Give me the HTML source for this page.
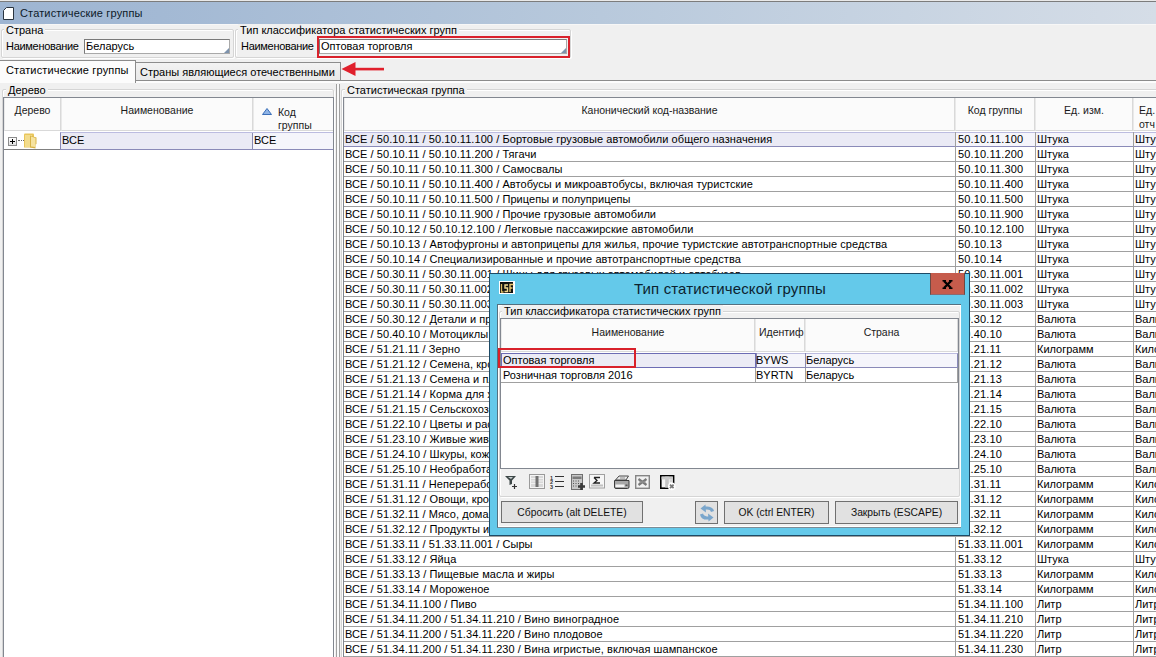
<!DOCTYPE html><html><head><meta charset="utf-8"><style>
*{box-sizing:border-box;margin:0;padding:0}
html,body{width:1156px;height:657px;overflow:hidden;background:#f0f0f0;font-family:"Liberation Sans",sans-serif;font-size:11px;color:#000;position:relative}
.a{position:absolute}
.t{position:absolute;white-space:nowrap;line-height:14px}
.frame{position:absolute;border:1px solid #d5d5d5;border-radius:2px;box-shadow:inset 1px 1px 0 #fff,1px 1px 0 #fff}
.lbl{position:absolute;background:#f0f0f0;padding:0 2px;line-height:12px;white-space:nowrap}
.inp{position:absolute;background:#fff;border:1px solid #7a7a7a;border-right-color:#a9a9a9;border-bottom-color:#a9a9a9}
.grip{position:absolute;right:0;bottom:0;width:0;height:0;border-left:5px solid transparent;border-bottom:5px solid #7d93ad}
.grid{position:absolute;background:#fff;border:1px solid #828790;overflow:hidden}
.hdr{position:absolute;background:#fbfbfb;border-left:1px solid #e9e9e9;border-right:1px solid #d9d9d9;border-bottom:1px solid #d9d9d9}
.ht{position:absolute;white-space:nowrap;font-size:10.5px;line-height:14px;text-align:center;color:#1a1a1a}
.row{position:absolute;left:0;height:15px;border-bottom:1px solid #a0a0a0}
.c{position:absolute;top:0;height:15px;line-height:14px;white-space:nowrap;overflow:hidden;padding-left:1px;border-left:1px solid #a0a0a0}
.sel{background:#f5f5fb;border-top:1px solid #bcbce0;border-bottom:1px solid #8a8ab8}
.btn{position:absolute;border:1px solid #707070;background:#e1e1e1;text-align:center;font-size:10.3px;line-height:22px;white-space:nowrap;color:#111}
</style></head><body>
<div class="a" style="left:0;top:0;width:1156px;height:1px;background:#e9e9e9"></div>
<div class="a" style="left:0;top:1px;width:1156px;height:1px;background:#7c7c7c"></div>
<div class="a" style="left:0;top:2px;width:1156px;height:22px;background:linear-gradient(90deg,#9eb5d2 0%,#a3b9d4 14%,#b8c9dc 52%,#d5dde7 100%)"></div>
<div class="a" style="left:0;top:24px;width:1156px;height:1px;background:#f7f7f7"></div>
<svg class="a" style="left:2px;top:6px" width="14" height="15" viewBox="0 0 14 15"><path d="M4.5 1.5 H11.5 V13.5 H1.5 V4.5 Z" fill="#fff" stroke="#2a3440" stroke-width="1"/></svg>
<div class="t" style="left:20px;top:6px;font-size:11px;letter-spacing:0.15px;color:#0d1a2a">Статистические группы</div>
<div class="frame" style="left:1px;top:29px;width:233px;height:29px"></div>
<div class="lbl" style="left:4px;top:24px">Страна</div>
<div class="t" style="left:6px;top:39px;letter-spacing:-0.3px">Наименование</div>
<div class="inp" style="left:84px;top:39px;width:146px;height:15px"><div class="grip"></div></div>
<div class="t" style="left:86px;top:39px">Беларусь</div>
<div class="frame" style="left:235px;top:29px;width:336px;height:29px"></div>
<div class="lbl" style="left:238px;top:24px">Тип классификатора статистических групп</div>
<div class="t" style="left:241px;top:39px;letter-spacing:-0.3px">Наименование</div>
<div class="inp" style="left:319px;top:39px;width:248px;height:15px"><div class="grip"></div></div>
<div class="t" style="left:321px;top:39px">Оптовая торговля</div>
<div class="a" style="left:317px;top:36px;width:253px;height:22px;border:2px solid #d9212b"></div>
<div class="a" style="left:135px;top:62px;width:206px;height:19px;border:1px solid #8c8c8c;border-bottom:none;background:linear-gradient(#f2f2f2,#e8e8e8)"></div>
<div class="t" style="left:140px;top:65px">Страны являющиеся отечественными</div>
<div class="a" style="left:0;top:80px;width:1156px;height:1px;background:#8c8c8c"></div>
<div class="a" style="left:0;top:81px;width:1156px;height:2px;background:#fdfdfd"></div>
<div class="a" style="left:0;top:60px;width:136px;height:23px;border:1px solid #8c8c8c;border-left:none;border-bottom:none;background:#fcfcfc"></div>
<div class="t" style="left:6px;top:63px;letter-spacing:0.15px">Статистические группы</div>
<svg class="a" style="left:340px;top:60px" width="50" height="20" viewBox="0 0 50 20"><path d="M1.5 9 L15.5 2 L15.5 16 Z" fill="#e0202c"/><rect x="14" y="7.8" width="30" height="2.6" fill="#e0202c"/></svg>
<div class="frame" style="left:2px;top:89px;width:332px;height:580px"></div>
<div class="lbl" style="left:6px;top:84px">Дерево</div>
<div class="grid" style="left:3px;top:97px;width:331px;height:570px">
<div class="hdr" style="left:0;top:0;width:57px;height:33px"></div>
<div class="hdr" style="left:57px;top:0;width:192px;height:33px"></div>
<div class="hdr" style="left:249px;top:0;width:82px;height:33px"></div>
<div class="ht" style="left:0;top:5px;width:57px">Дерево</div>
<div class="ht" style="left:57px;top:5px;width:192px">Наименование</div>
<svg class="a" style="left:258px;top:10px" width="10" height="7" viewBox="0 0 10 7"><path d="M5 0.5 L9.5 6.5 H0.5 Z" fill="#8fb4e6" stroke="#3b6fb8" stroke-width="1"/></svg>
<div class="ht" style="left:274px;top:7px;text-align:left">Код</div>
<div class="ht" style="left:274px;top:20px;text-align:left">группы</div>
<div class="a" style="left:0;top:34px;width:331px;height:18px;border-bottom:1px solid #808080"></div>
<div class="a sel" style="left:56px;top:34px;width:275px;height:18px;border-left:1px solid #8a8ab8;border-right:2px solid #80809a"></div>
<div class="a" style="left:57px;top:35px;width:191px;height:16px;background:#eaeaf5"></div>
<div class="a" style="left:248px;top:35px;width:1px;height:16px;background:#8a8ab0"></div>
<div class="t" style="left:58px;top:35px">ВСЕ</div>
<div class="t" style="left:250px;top:35px">ВСЕ</div>
<div class="a" style="left:4px;top:39px;width:9px;height:9px;border:1px solid #8c8c8c;background:linear-gradient(#fff,#e0e0e0)"></div>
<div class="a" style="left:6px;top:43px;width:5px;height:1px;background:#000"></div>
<div class="a" style="left:8px;top:41px;width:1px;height:5px;background:#000"></div>
<div class="a" style="left:14px;top:42px;width:6px;height:1px;border-top:1px dotted #666"></div>
<svg class="a" style="left:17px;top:34px" width="18" height="17" viewBox="0 0 18 17"><path d="M3 2.5 Q3 1.5 4 1.5 H12 Q13 1.5 13 2.5 V15.5 H3 Z" fill="#e9c65a"/><path d="M4 3 H11 V15 H4 Z" fill="#f3dc8c"/><path d="M9 3.5 L15.5 5.5 V12 L14.5 12.5 V16.5 L9 15.5 Z" fill="#d9b448"/><path d="M10 4.5 L14.5 6 V15 L10 14.5 Z" fill="#f6e3a0"/></svg>
</div>
<div class="a" style="left:336px;top:84px;width:1px;height:573px;background:#a0a0a0"></div>
<div class="a" style="left:337px;top:84px;width:2px;height:573px;background:#fafafa"></div>
<div class="a" style="left:339px;top:84px;width:1px;height:573px;background:#a0a0a0"></div>
<div class="frame" style="left:341px;top:89px;width:830px;height:580px"></div>
<div class="lbl" style="left:345px;top:84px">Статистическая группа</div>
<div class="grid" style="left:343px;top:97px;width:820px;height:570px">
<div class="hdr" style="left:0px;top:0;width:611px;height:33px"></div>
<div class="hdr" style="left:611px;top:0;width:80px;height:33px"></div>
<div class="hdr" style="left:691px;top:0;width:98px;height:33px"></div>
<div class="hdr" style="left:789px;top:0;width:40px;height:33px"></div>
<div class="ht" style="left:0;top:5px;width:611px">Канонический код-название</div>
<div class="ht" style="left:611px;top:5px;width:80px">Код группы</div>
<div class="ht" style="left:691px;top:5px;width:98px">Ед. изм.</div>
<div class="ht" style="left:795px;top:5px;text-align:left">Ед.</div>
<div class="ht" style="left:795px;top:19px;text-align:left">отч</div>
<div class="a" style="left:0;top:34px;width:820px;height:15px;border-bottom:1px solid #a0a0a0;background:linear-gradient(90deg,#eaeaf5 611px,#f5f5fb 611px);border-top:1px solid #bcbce0;border-bottom-color:#8a8ab8"></div>
<div class="t" style="left:1px;top:34px;letter-spacing:0.07px">ВСЕ / 50.10.11 / 50.10.11.100 / Бортовые грузовые автомобили общего назначения</div>
<div class="a" style="left:611px;top:34px;width:1px;height:15px;background:#a0a0a0"></div>
<div class="t" style="left:614px;top:34px;letter-spacing:0.15px">50.10.11.100</div>
<div class="a" style="left:691px;top:34px;width:1px;height:15px;background:#a0a0a0"></div>
<div class="t" style="left:693px;top:34px">Штука</div>
<div class="a" style="left:789px;top:34px;width:1px;height:15px;background:#a0a0a0"></div>
<div class="t" style="left:791px;top:34px">Штука</div>
<div class="a" style="left:0;top:49px;width:820px;height:15px;border-bottom:1px solid #a0a0a0"></div>
<div class="t" style="left:1px;top:49px;letter-spacing:0.07px">ВСЕ / 50.10.11 / 50.10.11.200 / Тягачи</div>
<div class="a" style="left:611px;top:49px;width:1px;height:15px;background:#a0a0a0"></div>
<div class="t" style="left:614px;top:49px;letter-spacing:0.15px">50.10.11.200</div>
<div class="a" style="left:691px;top:49px;width:1px;height:15px;background:#a0a0a0"></div>
<div class="t" style="left:693px;top:49px">Штука</div>
<div class="a" style="left:789px;top:49px;width:1px;height:15px;background:#a0a0a0"></div>
<div class="t" style="left:791px;top:49px">Штука</div>
<div class="a" style="left:0;top:64px;width:820px;height:15px;border-bottom:1px solid #a0a0a0"></div>
<div class="t" style="left:1px;top:64px;letter-spacing:0.07px">ВСЕ / 50.10.11 / 50.10.11.300 / Самосвалы</div>
<div class="a" style="left:611px;top:64px;width:1px;height:15px;background:#a0a0a0"></div>
<div class="t" style="left:614px;top:64px;letter-spacing:0.15px">50.10.11.300</div>
<div class="a" style="left:691px;top:64px;width:1px;height:15px;background:#a0a0a0"></div>
<div class="t" style="left:693px;top:64px">Штука</div>
<div class="a" style="left:789px;top:64px;width:1px;height:15px;background:#a0a0a0"></div>
<div class="t" style="left:791px;top:64px">Штука</div>
<div class="a" style="left:0;top:79px;width:820px;height:15px;border-bottom:1px solid #a0a0a0"></div>
<div class="t" style="left:1px;top:79px;letter-spacing:0.07px">ВСЕ / 50.10.11 / 50.10.11.400 / Автобусы и микроавтобусы, включая туристские</div>
<div class="a" style="left:611px;top:79px;width:1px;height:15px;background:#a0a0a0"></div>
<div class="t" style="left:614px;top:79px;letter-spacing:0.15px">50.10.11.400</div>
<div class="a" style="left:691px;top:79px;width:1px;height:15px;background:#a0a0a0"></div>
<div class="t" style="left:693px;top:79px">Штука</div>
<div class="a" style="left:789px;top:79px;width:1px;height:15px;background:#a0a0a0"></div>
<div class="t" style="left:791px;top:79px">Штука</div>
<div class="a" style="left:0;top:94px;width:820px;height:15px;border-bottom:1px solid #a0a0a0"></div>
<div class="t" style="left:1px;top:94px;letter-spacing:0.07px">ВСЕ / 50.10.11 / 50.10.11.500 / Прицепы и полуприцепы</div>
<div class="a" style="left:611px;top:94px;width:1px;height:15px;background:#a0a0a0"></div>
<div class="t" style="left:614px;top:94px;letter-spacing:0.15px">50.10.11.500</div>
<div class="a" style="left:691px;top:94px;width:1px;height:15px;background:#a0a0a0"></div>
<div class="t" style="left:693px;top:94px">Штука</div>
<div class="a" style="left:789px;top:94px;width:1px;height:15px;background:#a0a0a0"></div>
<div class="t" style="left:791px;top:94px">Штука</div>
<div class="a" style="left:0;top:109px;width:820px;height:15px;border-bottom:1px solid #a0a0a0"></div>
<div class="t" style="left:1px;top:109px;letter-spacing:0.07px">ВСЕ / 50.10.11 / 50.10.11.900 / Прочие грузовые автомобили</div>
<div class="a" style="left:611px;top:109px;width:1px;height:15px;background:#a0a0a0"></div>
<div class="t" style="left:614px;top:109px;letter-spacing:0.15px">50.10.11.900</div>
<div class="a" style="left:691px;top:109px;width:1px;height:15px;background:#a0a0a0"></div>
<div class="t" style="left:693px;top:109px">Штука</div>
<div class="a" style="left:789px;top:109px;width:1px;height:15px;background:#a0a0a0"></div>
<div class="t" style="left:791px;top:109px">Штука</div>
<div class="a" style="left:0;top:124px;width:820px;height:15px;border-bottom:1px solid #a0a0a0"></div>
<div class="t" style="left:1px;top:124px;letter-spacing:0.07px">ВСЕ / 50.10.12 / 50.10.12.100 / Легковые пассажирские автомобили</div>
<div class="a" style="left:611px;top:124px;width:1px;height:15px;background:#a0a0a0"></div>
<div class="t" style="left:614px;top:124px;letter-spacing:0.15px">50.10.12.100</div>
<div class="a" style="left:691px;top:124px;width:1px;height:15px;background:#a0a0a0"></div>
<div class="t" style="left:693px;top:124px">Штука</div>
<div class="a" style="left:789px;top:124px;width:1px;height:15px;background:#a0a0a0"></div>
<div class="t" style="left:791px;top:124px">Штука</div>
<div class="a" style="left:0;top:139px;width:820px;height:15px;border-bottom:1px solid #a0a0a0"></div>
<div class="t" style="left:1px;top:139px;letter-spacing:0.07px">ВСЕ / 50.10.13 / Автофургоны и автоприцепы для жилья, прочие туристские автотранспортные средства</div>
<div class="a" style="left:611px;top:139px;width:1px;height:15px;background:#a0a0a0"></div>
<div class="t" style="left:614px;top:139px;letter-spacing:0.15px">50.10.13</div>
<div class="a" style="left:691px;top:139px;width:1px;height:15px;background:#a0a0a0"></div>
<div class="t" style="left:693px;top:139px">Штука</div>
<div class="a" style="left:789px;top:139px;width:1px;height:15px;background:#a0a0a0"></div>
<div class="t" style="left:791px;top:139px">Штука</div>
<div class="a" style="left:0;top:154px;width:820px;height:15px;border-bottom:1px solid #a0a0a0"></div>
<div class="t" style="left:1px;top:154px;letter-spacing:0.07px">ВСЕ / 50.10.14 / Специализированные и прочие автотранспортные средства</div>
<div class="a" style="left:611px;top:154px;width:1px;height:15px;background:#a0a0a0"></div>
<div class="t" style="left:614px;top:154px;letter-spacing:0.15px">50.10.14</div>
<div class="a" style="left:691px;top:154px;width:1px;height:15px;background:#a0a0a0"></div>
<div class="t" style="left:693px;top:154px">Штука</div>
<div class="a" style="left:789px;top:154px;width:1px;height:15px;background:#a0a0a0"></div>
<div class="t" style="left:791px;top:154px">Штука</div>
<div class="a" style="left:0;top:169px;width:820px;height:15px;border-bottom:1px solid #a0a0a0"></div>
<div class="t" style="left:1px;top:169px;letter-spacing:0.07px">ВСЕ / 50.30.11 / 50.30.11.001 / Шины для грузовых автомобилей и автобусов</div>
<div class="a" style="left:611px;top:169px;width:1px;height:15px;background:#a0a0a0"></div>
<div class="t" style="left:614px;top:169px;letter-spacing:0.15px">50.30.11.001</div>
<div class="a" style="left:691px;top:169px;width:1px;height:15px;background:#a0a0a0"></div>
<div class="t" style="left:693px;top:169px">Штука</div>
<div class="a" style="left:789px;top:169px;width:1px;height:15px;background:#a0a0a0"></div>
<div class="t" style="left:791px;top:169px">Штука</div>
<div class="a" style="left:0;top:184px;width:820px;height:15px;border-bottom:1px solid #a0a0a0"></div>
<div class="t" style="left:1px;top:184px;letter-spacing:0.07px">ВСЕ / 50.30.11 / 50.30.11.002 / Шины для легковых автомобилей</div>
<div class="a" style="left:611px;top:184px;width:1px;height:15px;background:#a0a0a0"></div>
<div class="t" style="left:614px;top:184px;letter-spacing:0.15px">50.30.11.002</div>
<div class="a" style="left:691px;top:184px;width:1px;height:15px;background:#a0a0a0"></div>
<div class="t" style="left:693px;top:184px">Штука</div>
<div class="a" style="left:789px;top:184px;width:1px;height:15px;background:#a0a0a0"></div>
<div class="t" style="left:791px;top:184px">Штука</div>
<div class="a" style="left:0;top:199px;width:820px;height:15px;border-bottom:1px solid #a0a0a0"></div>
<div class="t" style="left:1px;top:199px;letter-spacing:0.07px">ВСЕ / 50.30.11 / 50.30.11.003 / Шины прочие</div>
<div class="a" style="left:611px;top:199px;width:1px;height:15px;background:#a0a0a0"></div>
<div class="t" style="left:614px;top:199px;letter-spacing:0.15px">50.30.11.003</div>
<div class="a" style="left:691px;top:199px;width:1px;height:15px;background:#a0a0a0"></div>
<div class="t" style="left:693px;top:199px">Штука</div>
<div class="a" style="left:789px;top:199px;width:1px;height:15px;background:#a0a0a0"></div>
<div class="t" style="left:791px;top:199px">Штука</div>
<div class="a" style="left:0;top:214px;width:820px;height:15px;border-bottom:1px solid #a0a0a0"></div>
<div class="t" style="left:1px;top:214px;letter-spacing:0.07px">ВСЕ / 50.30.12 / Детали и принадлежности</div>
<div class="a" style="left:611px;top:214px;width:1px;height:15px;background:#a0a0a0"></div>
<div class="t" style="left:614px;top:214px;letter-spacing:0.15px">50.30.12</div>
<div class="a" style="left:691px;top:214px;width:1px;height:15px;background:#a0a0a0"></div>
<div class="t" style="left:693px;top:214px">Валюта</div>
<div class="a" style="left:789px;top:214px;width:1px;height:15px;background:#a0a0a0"></div>
<div class="t" style="left:791px;top:214px">Валюта</div>
<div class="a" style="left:0;top:229px;width:820px;height:15px;border-bottom:1px solid #a0a0a0"></div>
<div class="t" style="left:1px;top:229px;letter-spacing:0.07px">ВСЕ / 50.40.10 / Мотоциклы</div>
<div class="a" style="left:611px;top:229px;width:1px;height:15px;background:#a0a0a0"></div>
<div class="t" style="left:614px;top:229px;letter-spacing:0.15px">50.40.10</div>
<div class="a" style="left:691px;top:229px;width:1px;height:15px;background:#a0a0a0"></div>
<div class="t" style="left:693px;top:229px">Валюта</div>
<div class="a" style="left:789px;top:229px;width:1px;height:15px;background:#a0a0a0"></div>
<div class="t" style="left:791px;top:229px">Валюта</div>
<div class="a" style="left:0;top:244px;width:820px;height:15px;border-bottom:1px solid #a0a0a0"></div>
<div class="t" style="left:1px;top:244px;letter-spacing:0.07px">ВСЕ / 51.21.11 / Зерно</div>
<div class="a" style="left:611px;top:244px;width:1px;height:15px;background:#a0a0a0"></div>
<div class="t" style="left:614px;top:244px;letter-spacing:0.15px">51.21.11</div>
<div class="a" style="left:691px;top:244px;width:1px;height:15px;background:#a0a0a0"></div>
<div class="t" style="left:693px;top:244px">Килограмм</div>
<div class="a" style="left:789px;top:244px;width:1px;height:15px;background:#a0a0a0"></div>
<div class="t" style="left:791px;top:244px">Килограмм</div>
<div class="a" style="left:0;top:259px;width:820px;height:15px;border-bottom:1px solid #a0a0a0"></div>
<div class="t" style="left:1px;top:259px;letter-spacing:0.07px">ВСЕ / 51.21.12 / Семена, кроме масличных</div>
<div class="a" style="left:611px;top:259px;width:1px;height:15px;background:#a0a0a0"></div>
<div class="t" style="left:614px;top:259px;letter-spacing:0.15px">51.21.12</div>
<div class="a" style="left:691px;top:259px;width:1px;height:15px;background:#a0a0a0"></div>
<div class="t" style="left:693px;top:259px">Валюта</div>
<div class="a" style="left:789px;top:259px;width:1px;height:15px;background:#a0a0a0"></div>
<div class="t" style="left:791px;top:259px">Валюта</div>
<div class="a" style="left:0;top:274px;width:820px;height:15px;border-bottom:1px solid #a0a0a0"></div>
<div class="t" style="left:1px;top:274px;letter-spacing:0.07px">ВСЕ / 51.21.13 / Семена и плоды масличных</div>
<div class="a" style="left:611px;top:274px;width:1px;height:15px;background:#a0a0a0"></div>
<div class="t" style="left:614px;top:274px;letter-spacing:0.15px">51.21.13</div>
<div class="a" style="left:691px;top:274px;width:1px;height:15px;background:#a0a0a0"></div>
<div class="t" style="left:693px;top:274px">Валюта</div>
<div class="a" style="left:789px;top:274px;width:1px;height:15px;background:#a0a0a0"></div>
<div class="t" style="left:791px;top:274px">Валюта</div>
<div class="a" style="left:0;top:289px;width:820px;height:15px;border-bottom:1px solid #a0a0a0"></div>
<div class="t" style="left:1px;top:289px;letter-spacing:0.07px">ВСЕ / 51.21.14 / Корма для животных</div>
<div class="a" style="left:611px;top:289px;width:1px;height:15px;background:#a0a0a0"></div>
<div class="t" style="left:614px;top:289px;letter-spacing:0.15px">51.21.14</div>
<div class="a" style="left:691px;top:289px;width:1px;height:15px;background:#a0a0a0"></div>
<div class="t" style="left:693px;top:289px">Валюта</div>
<div class="a" style="left:789px;top:289px;width:1px;height:15px;background:#a0a0a0"></div>
<div class="t" style="left:791px;top:289px">Валюта</div>
<div class="a" style="left:0;top:304px;width:820px;height:15px;border-bottom:1px solid #a0a0a0"></div>
<div class="t" style="left:1px;top:304px;letter-spacing:0.07px">ВСЕ / 51.21.15 / Сельскохозяйственное сырье</div>
<div class="a" style="left:611px;top:304px;width:1px;height:15px;background:#a0a0a0"></div>
<div class="t" style="left:614px;top:304px;letter-spacing:0.15px">51.21.15</div>
<div class="a" style="left:691px;top:304px;width:1px;height:15px;background:#a0a0a0"></div>
<div class="t" style="left:693px;top:304px">Валюта</div>
<div class="a" style="left:789px;top:304px;width:1px;height:15px;background:#a0a0a0"></div>
<div class="t" style="left:791px;top:304px">Валюта</div>
<div class="a" style="left:0;top:319px;width:820px;height:15px;border-bottom:1px solid #a0a0a0"></div>
<div class="t" style="left:1px;top:319px;letter-spacing:0.07px">ВСЕ / 51.22.10 / Цветы и растения</div>
<div class="a" style="left:611px;top:319px;width:1px;height:15px;background:#a0a0a0"></div>
<div class="t" style="left:614px;top:319px;letter-spacing:0.15px">51.22.10</div>
<div class="a" style="left:691px;top:319px;width:1px;height:15px;background:#a0a0a0"></div>
<div class="t" style="left:693px;top:319px">Валюта</div>
<div class="a" style="left:789px;top:319px;width:1px;height:15px;background:#a0a0a0"></div>
<div class="t" style="left:791px;top:319px">Валюта</div>
<div class="a" style="left:0;top:334px;width:820px;height:15px;border-bottom:1px solid #a0a0a0"></div>
<div class="t" style="left:1px;top:334px;letter-spacing:0.07px">ВСЕ / 51.23.10 / Живые животные</div>
<div class="a" style="left:611px;top:334px;width:1px;height:15px;background:#a0a0a0"></div>
<div class="t" style="left:614px;top:334px;letter-spacing:0.15px">51.23.10</div>
<div class="a" style="left:691px;top:334px;width:1px;height:15px;background:#a0a0a0"></div>
<div class="t" style="left:693px;top:334px">Валюта</div>
<div class="a" style="left:789px;top:334px;width:1px;height:15px;background:#a0a0a0"></div>
<div class="t" style="left:791px;top:334px">Валюта</div>
<div class="a" style="left:0;top:349px;width:820px;height:15px;border-bottom:1px solid #a0a0a0"></div>
<div class="t" style="left:1px;top:349px;letter-spacing:0.07px">ВСЕ / 51.24.10 / Шкуры, кожа</div>
<div class="a" style="left:611px;top:349px;width:1px;height:15px;background:#a0a0a0"></div>
<div class="t" style="left:614px;top:349px;letter-spacing:0.15px">51.24.10</div>
<div class="a" style="left:691px;top:349px;width:1px;height:15px;background:#a0a0a0"></div>
<div class="t" style="left:693px;top:349px">Валюта</div>
<div class="a" style="left:789px;top:349px;width:1px;height:15px;background:#a0a0a0"></div>
<div class="t" style="left:791px;top:349px">Валюта</div>
<div class="a" style="left:0;top:364px;width:820px;height:15px;border-bottom:1px solid #a0a0a0"></div>
<div class="t" style="left:1px;top:364px;letter-spacing:0.07px">ВСЕ / 51.25.10 / Необработанный табак</div>
<div class="a" style="left:611px;top:364px;width:1px;height:15px;background:#a0a0a0"></div>
<div class="t" style="left:614px;top:364px;letter-spacing:0.15px">51.25.10</div>
<div class="a" style="left:691px;top:364px;width:1px;height:15px;background:#a0a0a0"></div>
<div class="t" style="left:693px;top:364px">Валюта</div>
<div class="a" style="left:789px;top:364px;width:1px;height:15px;background:#a0a0a0"></div>
<div class="t" style="left:791px;top:364px">Валюта</div>
<div class="a" style="left:0;top:379px;width:820px;height:15px;border-bottom:1px solid #a0a0a0"></div>
<div class="t" style="left:1px;top:379px;letter-spacing:0.07px">ВСЕ / 51.31.11 / Непереработанные фрукты</div>
<div class="a" style="left:611px;top:379px;width:1px;height:15px;background:#a0a0a0"></div>
<div class="t" style="left:614px;top:379px;letter-spacing:0.15px">51.31.11</div>
<div class="a" style="left:691px;top:379px;width:1px;height:15px;background:#a0a0a0"></div>
<div class="t" style="left:693px;top:379px">Килограмм</div>
<div class="a" style="left:789px;top:379px;width:1px;height:15px;background:#a0a0a0"></div>
<div class="t" style="left:791px;top:379px">Килограмм</div>
<div class="a" style="left:0;top:394px;width:820px;height:15px;border-bottom:1px solid #a0a0a0"></div>
<div class="t" style="left:1px;top:394px;letter-spacing:0.07px">ВСЕ / 51.31.12 / Овощи, кроме картофеля</div>
<div class="a" style="left:611px;top:394px;width:1px;height:15px;background:#a0a0a0"></div>
<div class="t" style="left:614px;top:394px;letter-spacing:0.15px">51.31.12</div>
<div class="a" style="left:691px;top:394px;width:1px;height:15px;background:#a0a0a0"></div>
<div class="t" style="left:693px;top:394px">Килограмм</div>
<div class="a" style="left:789px;top:394px;width:1px;height:15px;background:#a0a0a0"></div>
<div class="t" style="left:791px;top:394px">Килограмм</div>
<div class="a" style="left:0;top:409px;width:820px;height:15px;border-bottom:1px solid #a0a0a0"></div>
<div class="t" style="left:1px;top:409px;letter-spacing:0.07px">ВСЕ / 51.32.11 / Мясо, домашняя птица</div>
<div class="a" style="left:611px;top:409px;width:1px;height:15px;background:#a0a0a0"></div>
<div class="t" style="left:614px;top:409px;letter-spacing:0.15px">51.32.11</div>
<div class="a" style="left:691px;top:409px;width:1px;height:15px;background:#a0a0a0"></div>
<div class="t" style="left:693px;top:409px">Килограмм</div>
<div class="a" style="left:789px;top:409px;width:1px;height:15px;background:#a0a0a0"></div>
<div class="t" style="left:791px;top:409px">Килограмм</div>
<div class="a" style="left:0;top:424px;width:820px;height:15px;border-bottom:1px solid #a0a0a0"></div>
<div class="t" style="left:1px;top:424px;letter-spacing:0.07px">ВСЕ / 51.32.12 / Продукты из мяса</div>
<div class="a" style="left:611px;top:424px;width:1px;height:15px;background:#a0a0a0"></div>
<div class="t" style="left:614px;top:424px;letter-spacing:0.15px">51.32.12</div>
<div class="a" style="left:691px;top:424px;width:1px;height:15px;background:#a0a0a0"></div>
<div class="t" style="left:693px;top:424px">Килограмм</div>
<div class="a" style="left:789px;top:424px;width:1px;height:15px;background:#a0a0a0"></div>
<div class="t" style="left:791px;top:424px">Килограмм</div>
<div class="a" style="left:0;top:439px;width:820px;height:15px;border-bottom:1px solid #a0a0a0"></div>
<div class="t" style="left:1px;top:439px;letter-spacing:0.07px">ВСЕ / 51.33.11 / 51.33.11.001 / Сыры</div>
<div class="a" style="left:611px;top:439px;width:1px;height:15px;background:#a0a0a0"></div>
<div class="t" style="left:614px;top:439px;letter-spacing:0.15px">51.33.11.001</div>
<div class="a" style="left:691px;top:439px;width:1px;height:15px;background:#a0a0a0"></div>
<div class="t" style="left:693px;top:439px">Килограмм</div>
<div class="a" style="left:789px;top:439px;width:1px;height:15px;background:#a0a0a0"></div>
<div class="t" style="left:791px;top:439px">Килограмм</div>
<div class="a" style="left:0;top:454px;width:820px;height:15px;border-bottom:1px solid #a0a0a0"></div>
<div class="t" style="left:1px;top:454px;letter-spacing:0.07px">ВСЕ / 51.33.12 / Яйца</div>
<div class="a" style="left:611px;top:454px;width:1px;height:15px;background:#a0a0a0"></div>
<div class="t" style="left:614px;top:454px;letter-spacing:0.15px">51.33.12</div>
<div class="a" style="left:691px;top:454px;width:1px;height:15px;background:#a0a0a0"></div>
<div class="t" style="left:693px;top:454px">Штука</div>
<div class="a" style="left:789px;top:454px;width:1px;height:15px;background:#a0a0a0"></div>
<div class="t" style="left:791px;top:454px">Штука</div>
<div class="a" style="left:0;top:469px;width:820px;height:15px;border-bottom:1px solid #a0a0a0"></div>
<div class="t" style="left:1px;top:469px;letter-spacing:0.07px">ВСЕ / 51.33.13 / Пищевые масла и жиры</div>
<div class="a" style="left:611px;top:469px;width:1px;height:15px;background:#a0a0a0"></div>
<div class="t" style="left:614px;top:469px;letter-spacing:0.15px">51.33.13</div>
<div class="a" style="left:691px;top:469px;width:1px;height:15px;background:#a0a0a0"></div>
<div class="t" style="left:693px;top:469px">Килограмм</div>
<div class="a" style="left:789px;top:469px;width:1px;height:15px;background:#a0a0a0"></div>
<div class="t" style="left:791px;top:469px">Килограмм</div>
<div class="a" style="left:0;top:484px;width:820px;height:15px;border-bottom:1px solid #a0a0a0"></div>
<div class="t" style="left:1px;top:484px;letter-spacing:0.07px">ВСЕ / 51.33.14 / Мороженое</div>
<div class="a" style="left:611px;top:484px;width:1px;height:15px;background:#a0a0a0"></div>
<div class="t" style="left:614px;top:484px;letter-spacing:0.15px">51.33.14</div>
<div class="a" style="left:691px;top:484px;width:1px;height:15px;background:#a0a0a0"></div>
<div class="t" style="left:693px;top:484px">Килограмм</div>
<div class="a" style="left:789px;top:484px;width:1px;height:15px;background:#a0a0a0"></div>
<div class="t" style="left:791px;top:484px">Килограмм</div>
<div class="a" style="left:0;top:499px;width:820px;height:15px;border-bottom:1px solid #a0a0a0"></div>
<div class="t" style="left:1px;top:499px;letter-spacing:0.07px">ВСЕ / 51.34.11.100 / Пиво</div>
<div class="a" style="left:611px;top:499px;width:1px;height:15px;background:#a0a0a0"></div>
<div class="t" style="left:614px;top:499px;letter-spacing:0.15px">51.34.11.100</div>
<div class="a" style="left:691px;top:499px;width:1px;height:15px;background:#a0a0a0"></div>
<div class="t" style="left:693px;top:499px">Литр</div>
<div class="a" style="left:789px;top:499px;width:1px;height:15px;background:#a0a0a0"></div>
<div class="t" style="left:791px;top:499px">Литр</div>
<div class="a" style="left:0;top:514px;width:820px;height:15px;border-bottom:1px solid #a0a0a0"></div>
<div class="t" style="left:1px;top:514px;letter-spacing:0.07px">ВСЕ / 51.34.11.200 / 51.34.11.210 / Вино виноградное</div>
<div class="a" style="left:611px;top:514px;width:1px;height:15px;background:#a0a0a0"></div>
<div class="t" style="left:614px;top:514px;letter-spacing:0.15px">51.34.11.210</div>
<div class="a" style="left:691px;top:514px;width:1px;height:15px;background:#a0a0a0"></div>
<div class="t" style="left:693px;top:514px">Литр</div>
<div class="a" style="left:789px;top:514px;width:1px;height:15px;background:#a0a0a0"></div>
<div class="t" style="left:791px;top:514px">Литр</div>
<div class="a" style="left:0;top:529px;width:820px;height:15px;border-bottom:1px solid #a0a0a0"></div>
<div class="t" style="left:1px;top:529px;letter-spacing:0.07px">ВСЕ / 51.34.11.200 / 51.34.11.220 / Вино плодовое</div>
<div class="a" style="left:611px;top:529px;width:1px;height:15px;background:#a0a0a0"></div>
<div class="t" style="left:614px;top:529px;letter-spacing:0.15px">51.34.11.220</div>
<div class="a" style="left:691px;top:529px;width:1px;height:15px;background:#a0a0a0"></div>
<div class="t" style="left:693px;top:529px">Литр</div>
<div class="a" style="left:789px;top:529px;width:1px;height:15px;background:#a0a0a0"></div>
<div class="t" style="left:791px;top:529px">Литр</div>
<div class="a" style="left:0;top:544px;width:820px;height:15px;border-bottom:1px solid #a0a0a0"></div>
<div class="t" style="left:1px;top:544px;letter-spacing:0.07px">ВСЕ / 51.34.11.200 / 51.34.11.230 / Вина игристые, включая шампанское</div>
<div class="a" style="left:611px;top:544px;width:1px;height:15px;background:#a0a0a0"></div>
<div class="t" style="left:614px;top:544px;letter-spacing:0.15px">51.34.11.230</div>
<div class="a" style="left:691px;top:544px;width:1px;height:15px;background:#a0a0a0"></div>
<div class="t" style="left:693px;top:544px">Литр</div>
<div class="a" style="left:789px;top:544px;width:1px;height:15px;background:#a0a0a0"></div>
<div class="t" style="left:791px;top:544px">Литр</div>
</div>
<div class="a" style="left:489px;top:273px;width:481px;height:263px;background:#64c9ea;border:1px solid #1d4a66"></div>
<svg class="a" style="left:499px;top:281px" width="17" height="13" viewBox="0 0 17 13"><rect width="16" height="13" fill="#fff"/><rect x="1" y="1" width="13" height="11" fill="#111"/><path d="M2.5 3 V11 H4.5" stroke="#d8b860" stroke-width="1.3" fill="none"/><path d="M9 4 H6 V7 H8.5 V10.5 H5.5" stroke="#f0d890" stroke-width="1.4" fill="none"/><path d="M14.5 3.5 H11 V11 M11 7 H13.5" stroke="#e8c870" stroke-width="1.4" fill="none"/></svg>
<div class="t" style="left:634px;top:280px;font-size:15px;line-height:18px;color:#0c2330;letter-spacing:0.12px">Тип статистической группы</div>
<div class="a" style="left:930px;top:273px;width:35px;height:22px;background:#c65c4c;border:1px solid #6a4a44;border-top:none;border-bottom-color:#8a6a70"></div>
<svg class="a" style="left:942px;top:280px" width="11" height="9" viewBox="0 0 11 9"><path d="M2 1 L9 8 M9 1 L2 8" stroke="#000" stroke-width="2.3"/><path d="M0.5 0.8 H4 M7 0.8 H10.5 M0.5 8.2 H4 M7 8.2 H10.5" stroke="#000" stroke-width="1.4"/></svg>
<div class="a" style="left:497px;top:304px;width:464px;height:224px;background:#f0f0f0;border-left:1px solid #55707f;border-top:1px solid #55707f;border-bottom:1px solid #7b8c96;box-shadow:inset 1px 1px 0 #fff,inset -1px -1px 0 #fff"></div>
<div class="frame" style="left:499px;top:311px;width:461px;height:186px"></div>
<div class="lbl" style="left:502px;top:305px">Тип классификатора статистических групп</div>
<div class="grid" style="left:500px;top:318px;width:459px;height:151px">
<div class="hdr" style="left:0;top:0;width:254px;height:33px"></div>
<div class="hdr" style="left:254px;top:0;width:50px;height:33px"></div>
<div class="hdr" style="left:304px;top:0;width:153px;height:33px"></div>
<div class="ht" style="left:0;top:6px;width:254px">Наименование</div>
<div class="ht" style="left:254px;top:6px;width:50px;text-align:left;padding-left:4px">Идентиф</div>
<div class="ht" style="left:304px;top:6px;width:153px">Страна</div>
<div class="a" style="left:0;top:34px;width:457px;height:15px;background:#f5f5fb;border-top:1px solid #bcbce0;border-bottom:1px solid #8a8ab8;border-right:1px solid #8a8ab8"></div>
<div class="a" style="left:0;top:34px;width:255px;height:15px;background:#ebebf5;border:1px solid #6c6cb4"></div>
<div class="a" style="left:255px;top:34px;width:1px;height:15px;background:#8a8ab0"></div>
<div class="a" style="left:304px;top:34px;width:1px;height:15px;background:#8a8ab0"></div>
<div class="t" style="left:2px;top:34px">Оптовая торговля</div>
<div class="t" style="left:255px;top:34px">BYWS</div>
<div class="t" style="left:305px;top:34px">Беларусь</div>
<div class="a" style="left:0;top:49px;width:457px;height:15px;border-bottom:1px solid #a0a0a0;border-right:1px solid #a0a0a0"></div>
<div class="a" style="left:254px;top:49px;width:1px;height:15px;background:#a0a0a0"></div>
<div class="a" style="left:304px;top:49px;width:1px;height:15px;background:#a0a0a0"></div>
<div class="t" style="left:2px;top:49px">Розничная торговля 2016</div>
<div class="t" style="left:255px;top:49px">BYRTN</div>
<div class="t" style="left:305px;top:49px">Беларусь</div>
</div>
<div class="a" style="left:498px;top:348px;width:138px;height:20px;border:2px solid #d9212b"></div>
<svg class="a" style="left:500px;top:470px" width="180" height="24" viewBox="0 0 180 24">
<!-- filter+ -->
<path d="M5 6 H16 L12 10.5 V14 L9.5 15 V10.5 Z" fill="#3c4646"/>
<path d="M8 7 H13 L11 9 Z" fill="#c8d0d0"/>
<path d="M14.5 14 V19 M12 16.5 H17" stroke="#333" stroke-width="1.2"/>
<!-- columns -->
<rect x="29.5" y="4.5" width="15" height="14" fill="#f4f4f4" stroke="#9a9a9a"/>
<rect x="31" y="6" width="12" height="11" fill="#d8d8d8"/>
<path d="M31 8.5 H43 M31 11 H43 M31 13.5 H43" stroke="#f6f6f6" stroke-width="0.8"/>
<rect x="35.5" y="6" width="3" height="11" fill="#707070"/>
<!-- numbered list -->
<text x="50" y="9.5" font-family="Liberation Sans" font-weight="bold" font-size="5.5" fill="#333">1</text>
<text x="50" y="14" font-family="Liberation Sans" font-weight="bold" font-size="5.5" fill="#333">2</text>
<text x="50" y="18.5" font-family="Liberation Sans" font-weight="bold" font-size="5.5" fill="#333">3</text>
<path d="M55 6.5 H64 M55 11.5 H64 M55 16.5 H64" stroke="#333" stroke-width="1.1"/>
<!-- calculator+ -->
<rect x="71.5" y="4.5" width="11" height="15" fill="#c8c8c8" stroke="#707070"/>
<rect x="72.5" y="6.5" width="9" height="2.5" fill="#7a7a7a"/>
<path d="M73 11 h1 m1.5 0 h1 m1.5 0 h1 M73 13.5 h1 m1.5 0 h1 m1.5 0 h1 M73 16 h1 m1.5 0 h1" stroke="#555" stroke-width="1"/>
<path d="M81.5 13 V20 M78 16.5 H85" stroke="#3a3a3a" stroke-width="2.6"/>
<!-- sigma -->
<rect x="89.5" y="4.5" width="15" height="13.5" fill="#f6f6f6" stroke="#a0a0a0"/>
<rect x="91" y="14.5" width="12" height="2" fill="#c0c0c0"/>
<path d="M94 7.5 H100 M94 7.5 L97 10.5 L94 13 H100" stroke="#222" stroke-width="1.3" fill="none"/>
<!-- printer -->
<path d="M115.5 10 L119 6 H128.5 L126 10 Z" fill="#e8e8e8" stroke="#4a4a4a" stroke-width="1"/>
<path d="M120 8 H125" stroke="#888" stroke-width="0.9"/>
<path d="M114.5 10.5 H129 V17 Q129 18.5 127.5 18.5 H116 Q114.5 18.5 114.5 17 Z" fill="#a8a8a8" stroke="#3c3c3c" stroke-width="1"/>
<rect x="115.5" y="14.5" width="9" height="2.5" fill="#f4f4f4"/>
<rect x="125.5" y="14.5" width="2" height="1.5" fill="#555"/>
<!-- excel -->
<rect x="135.7" y="5.7" width="13.6" height="12.6" fill="#f2f2f2" stroke="#858585" stroke-width="1.4"/>
<path d="M138.5 9 L146.5 15 M146.5 9 L138.5 15" stroke="#7a7a7a" stroke-width="2.2"/>
<path d="M139 12 H146" stroke="#9a9a9a" stroke-width="1"/>
<!-- grid x -->
<rect x="160.8" y="5.8" width="12.8" height="12.4" fill="#f4f4f4" stroke="#000" stroke-width="1.6"/>
<rect x="165.2" y="6.6" width="3.6" height="11" fill="#c4c4c4"/>
<rect x="161.6" y="6.6" width="11.2" height="2.8" fill="#cacaca"/>
<rect x="169.6" y="9.4" width="3.2" height="3" fill="#d6d6d6"/>
<circle cx="171.8" cy="16.4" r="3.8" fill="#fff"/>
<path d="M170 14.6 L173.6 18.2 M173.6 14.6 L170 18.2" stroke="#7a7a7a" stroke-width="1.8"/>
</svg>
<div class="btn" style="left:501px;top:501px;width:142px;height:22px;line-height:21px">Сбросить (alt DELETE)</div>
<div class="btn" style="left:695px;top:501px;width:23px;height:23px;border-color:#707070"></div>
<svg class="a" style="left:697px;top:503px" width="20" height="20" viewBox="0 0 20 20"><path d="M15.5 8.5 Q14.5 5 10 5 L8 5" stroke="#7aa6cc" stroke-width="3.2" fill="none"/><path d="M3.5 5.5 L8.5 1.5 L9 9.5 Z" fill="#7aa6cc"/><path d="M4.5 11 Q5.5 15 10 15 L12 15" stroke="#7aa6cc" stroke-width="3.2" fill="none"/><path d="M16.5 14.5 L11.5 18.5 L11 10.5 Z" fill="#7aa6cc"/></svg>
<div class="btn" style="left:724px;top:501px;width:105px;height:23px">OK (ctrl ENTER)</div>
<div class="btn" style="left:835px;top:501px;width:123px;height:23px">Закрыть (ESCAPE)</div>
</body></html>
